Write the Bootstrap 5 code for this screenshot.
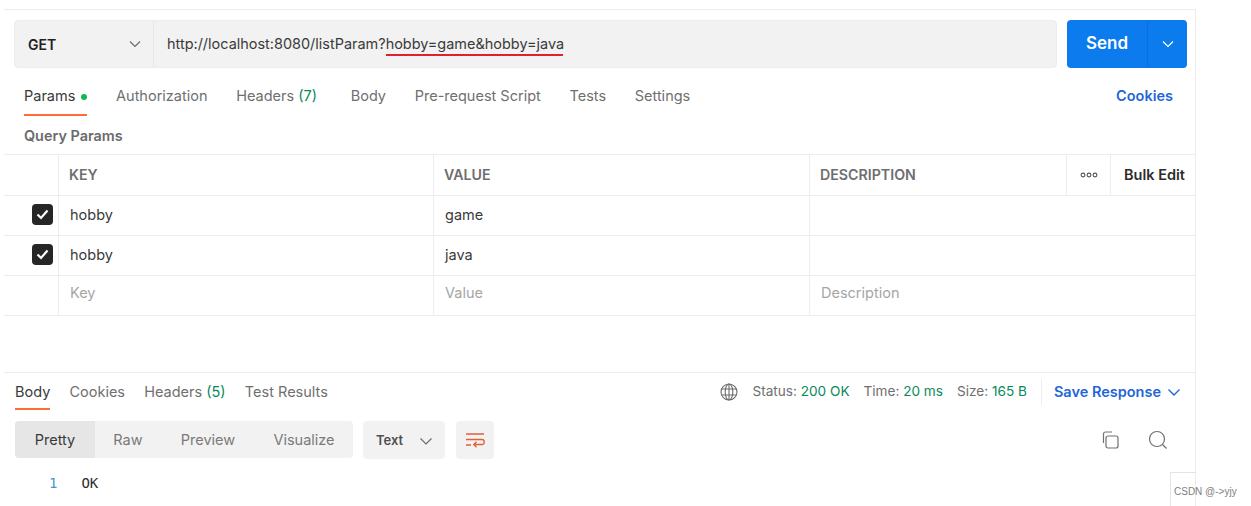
<!DOCTYPE html>
<html lang="en"><head><meta charset="utf-8"><title>Postman</title>
<link href="https://cdn.jsdelivr.net/npm/bootstrap@5.3.0/dist/css/bootstrap.min.css" rel="stylesheet">
<style>
html,body{height:506px;overflow:hidden;background:#fff}
body{font-family:Inter,"Liberation Sans",sans-serif;font-size:14.5px;color:#6f6f6f;position:relative}
.frame{margin:9px 0 0 4px;width:1192px;height:497px;border-top:1px solid #ededed;border-right:1px solid #ededed}
.urlrow{padding:10px 8px 0 10px;height:58px}
.urlbox{height:48px;width:1043px;background:#f2f2f2;border:1px solid #ededed;border-radius:4px}
.method{width:139px;padding-left:13px;padding-right:11px;border-right:1px solid #e6e6e6;font-weight:600;color:#212121;font-size:14px}
.urltext{padding-left:13px;color:#3a3a3a;font-size:14.46px;position:relative}
.redline{position:absolute;left:232px;top:21px;width:177px;height:2px;background:#e0202e}
.sendbtn{width:120px;height:48px;background:#0c7bee;border-radius:4px;color:#fff;font-weight:600;font-size:17px}
.sendmain{width:81px;border-right:1px solid #0a6fd8}
.tabsrow{height:48px;padding:0 22px 0 20px}
.reqtab{height:48px;padding-top:18px;line-height:20px;margin-right:28.7px;white-space:nowrap}
.reqtab.on{color:#3a3a3a;position:relative}
.reqtab.headtab{margin-right:33.7px}
.under{position:absolute;left:0;right:0;bottom:0;height:2px;background:#ff6c37}
.dot{width:6px;height:6px;border-radius:50%;background:#0cbb52;margin-left:6px;display:inline-block;vertical-align:1px}
.grn{color:#0a8a5a}
.bluelink{color:#1f66d8;font-weight:600}
.qp{height:38px;padding:9px 0 0 20px;font-weight:600;font-size:14.4px;color:#6b6b6b;line-height:22px}
.trow{height:40px;border-top:1px solid #ededed}
.trow.head{height:41px}
.trow.lastrow{border-bottom:1px solid #ededed;height:41px}
.c0{width:54px;flex:none;display:flex;align-items:center;justify-content:flex-end;padding:0 5px 2px 0}
.c1,.c2,.c3,.c4,.c5{flex:none;border-left:1px solid #ededed;height:100%;display:flex;align-items:center}
.c1{width:375px;padding-left:11px}.c2{width:376px;padding-left:11px}.c3{width:257px;padding-left:11px}
.c4{width:44px;justify-content:center}.c5{flex:1;padding-left:13px;font-weight:600;color:#2b2b2b;white-space:nowrap}
.head{font-weight:600;color:#6e6e6e;font-size:14.2px}
.head .c1,.head .c2,.head .c3{padding-left:10px}
.head .c5{font-size:14.5px}
.ck{width:21px;height:21px;background:#262626;border-radius:4px;display:flex;align-items:center;justify-content:center}
.val{color:#3a3a3a}
.val .c1,.val .c2{padding-bottom:2px}
.ph{color:#a6a6a6}
.ph .c1,.ph .c2,.ph .c3{padding-bottom:6px}
.resp{margin-top:56px;border-top:1px solid #ededed;height:125px}
.resphead{height:37px;padding:0 14px 0 11px}
.rtab{height:37px;line-height:37px;margin-right:19.2px;position:relative;white-space:nowrap}
.rtab.on{color:#3a3a3a}
.meta{font-size:13.6px;margin-left:14px;white-space:nowrap}
.sep{width:1px;height:26px;background:#ededed;margin:0 12px 0 14px}
.seg{margin:11px 0 0 11px}
.segs{width:338px;height:37px;background:#f2f2f2;border-radius:4px;color:#7a7a7a}
.seg1{width:80px;height:37px;background:#e6e6e6;border-radius:4px 0 0 4px;color:#3a3a3a;text-align:center;line-height:37px}
.seg2{text-align:center;line-height:37px}
.wraw{width:66px}.wprev{width:94px}.wvis{width:98px}
.fmt{width:82px;height:38px;background:#f2f2f2;border-radius:4px;margin-left:10px;padding:2px 0 0 13px;font-weight:600;color:#505050;font-size:13px}
.wrapb{width:38px;height:38px;background:#f2f2f2;border-radius:4px;margin-left:11px}
.tools{margin-left:auto;padding-right:27px;gap:28px;height:38px}
.code{margin:14px 0 0 45px;font-family:"DejaVu Sans Mono","Liberation Mono",monospace;font-size:14px;line-height:20px}
.ln{color:#3d9ccb;margin-right:24px}
.okt{color:#2b2b2b}
.savechev{margin-left:6px}
.wm{position:absolute;left:1170px;top:472px;width:26px;height:34px;border-top:1px solid #e4e4e4;border-left:1px solid #e4e4e4}
.wmt{position:absolute;left:1174px;top:485px;font-size:10px;line-height:14px;color:#808080;font-family:"Liberation Sans",sans-serif;white-space:nowrap}
</style></head><body>
<div class="frame">
 <div class="urlrow d-flex">
  <div class="urlbox d-flex align-items-center">
   <div class="method d-flex align-items-center justify-content-between h-100"><span>GET</span><svg width="14" height="14" viewBox="0 0 14 14" fill="none" stroke="#6b6b6b" stroke-width="1.2"><path d="M2 4.500l5 5 5-5"/></svg></div>
   <div class="urltext">http://localhost:8080/listParam?hobby=game&amp;hobby=java<span class="redline"></span></div>
  </div>
  <div class="sendbtn d-flex ms-auto">
   <div class="sendmain d-flex align-items-center justify-content-center">Send</div>
   <div class="flex-fill d-flex align-items-center justify-content-center"><svg width="14" height="14" viewBox="0 0 14 14" fill="none" stroke="#fff" stroke-width="1.2"><path d="M2 4.500l5 5 5-5"/></svg></div>
  </div>
 </div>
 <div class="tabsrow d-flex">
  <div class="reqtab on">Params<span class="dot"></span><span class="under"></span></div>
  <div class="reqtab">Authorization</div>
  <div class="reqtab headtab">Headers <span class="grn">(7)</span></div>
  <div class="reqtab">Body</div>
  <div class="reqtab">Pre-request Script</div>
  <div class="reqtab">Tests</div>
  <div class="reqtab">Settings</div>
  <div class="reqtab bluelink ms-auto me-0">Cookies</div>
 </div>
 <div class="qp">Query Params</div>
 <div class="trow head d-flex">
  <div class="c0"></div><div class="c1">KEY</div><div class="c2">VALUE</div><div class="c3">DESCRIPTION</div>
  <div class="c4"><svg width="18" height="6" viewBox="0 0 18 6" fill="none" stroke="#555" stroke-width="1.1"><circle cx="3" cy="3" r="1.9"/><circle cx="9" cy="3" r="1.9"/><circle cx="15" cy="3" r="1.9"/></svg></div><div class="c5">Bulk Edit</div>
 </div>
 <div class="trow d-flex val">
  <div class="c0"><span class="ck"><svg width="13" height="11" viewBox="0 0 13 11" fill="none" stroke="#fff" stroke-width="2.2"><path d="M1.500 5.500l3.500 3.500 6.500-7.500"/></svg></span></div><div class="c1">hobby</div><div class="c2">game</div><div class="c3"></div>
 </div>
 <div class="trow d-flex val">
  <div class="c0"><span class="ck"><svg width="13" height="11" viewBox="0 0 13 11" fill="none" stroke="#fff" stroke-width="2.2"><path d="M1.500 5.500l3.500 3.500 6.500-7.500"/></svg></span></div><div class="c1">hobby</div><div class="c2">java</div><div class="c3"></div>
 </div>
 <div class="trow lastrow d-flex ph">
  <div class="c0"></div><div class="c1">Key</div><div class="c2">Value</div><div class="c3">Description</div>
 </div>
 <div class="resp">
  <div class="resphead d-flex align-items-center">
   <div class="rtab on">Body<span class="under"></span></div>
   <div class="rtab">Cookies</div>
   <div class="rtab">Headers <span class="grn">(5)</span></div>
   <div class="rtab">Test Results</div>
   <svg class="ms-auto" width="18" height="18" viewBox="0 0 18 18" fill="none" stroke="#6b6b6b" stroke-width="1.1"><circle cx="9" cy="9" r="8"/><ellipse cx="9" cy="9" rx="3.800" ry="8"/><path d="M1.600 6h14.800M1.600 12h14.800M9 1v16"/></svg>
   <span class="meta">Status: <span class="grn">200 OK</span></span>
   <span class="meta">Time: <span class="grn">20 ms</span></span>
   <span class="meta">Size: <span class="grn">165 B</span></span>
   <span class="sep"></span>
   <span class="bluelink">Save Response</span>
   <svg class="savechev" width="14" height="14" viewBox="0 0 14 14" fill="none" stroke="#1f66d8" stroke-width="1.4"><path d="M1.500 4.500l5.500 5.500 5.500-5.500"/></svg>
  </div>
  <div class="seg d-flex align-items-start">
   <div class="segs d-flex">
    <div class="seg1">Pretty</div>
    <div class="seg2 wraw">Raw</div>
    <div class="seg2 wprev">Preview</div>
    <div class="seg2 wvis">Visualize</div>
   </div>
   <div class="fmt d-flex align-items-center">Text<svg class="ms-3" width="14" height="14" viewBox="0 0 14 14" fill="none" stroke="#6b6b6b" stroke-width="1.2"><path d="M1.500 4.500l5.500 5.500 5.500-5.500"/></svg></div>
   <div class="wrapb d-flex align-items-center justify-content-center"><svg width="20" height="18" viewBox="0 0 20 18" fill="none" stroke="#e0603a" stroke-width="1.3"><path d="M1 3h18M1 8.500h16c3 0 3 5 0 5h-8M11.500 10.800l-2.700 2.700 2.700 2.700M1 14h5"/></svg></div>
   <div class="tools d-flex align-items-center">
    <svg width="20" height="20" viewBox="0 0 20 20" fill="none" stroke="#707070" stroke-width="1.2"><rect x="6" y="6" width="12" height="12" rx="2"/><path d="M3.500 13V4a2 2 0 0 1 2-2H12"/></svg>
    <svg width="20" height="20" viewBox="0 0 20 20" fill="none" stroke="#707070" stroke-width="1.2"><circle cx="9" cy="9" r="7.500"/><path d="M14.500 14.500l4 4"/></svg>
   </div>
  </div>
  <div class="code"><span class="ln">1</span><span class="okt">OK</span></div>
 </div>
</div>
<div class="wm"></div>
<div class="wmt">CSDN @-&gt;yjy</div>
</body></html>
